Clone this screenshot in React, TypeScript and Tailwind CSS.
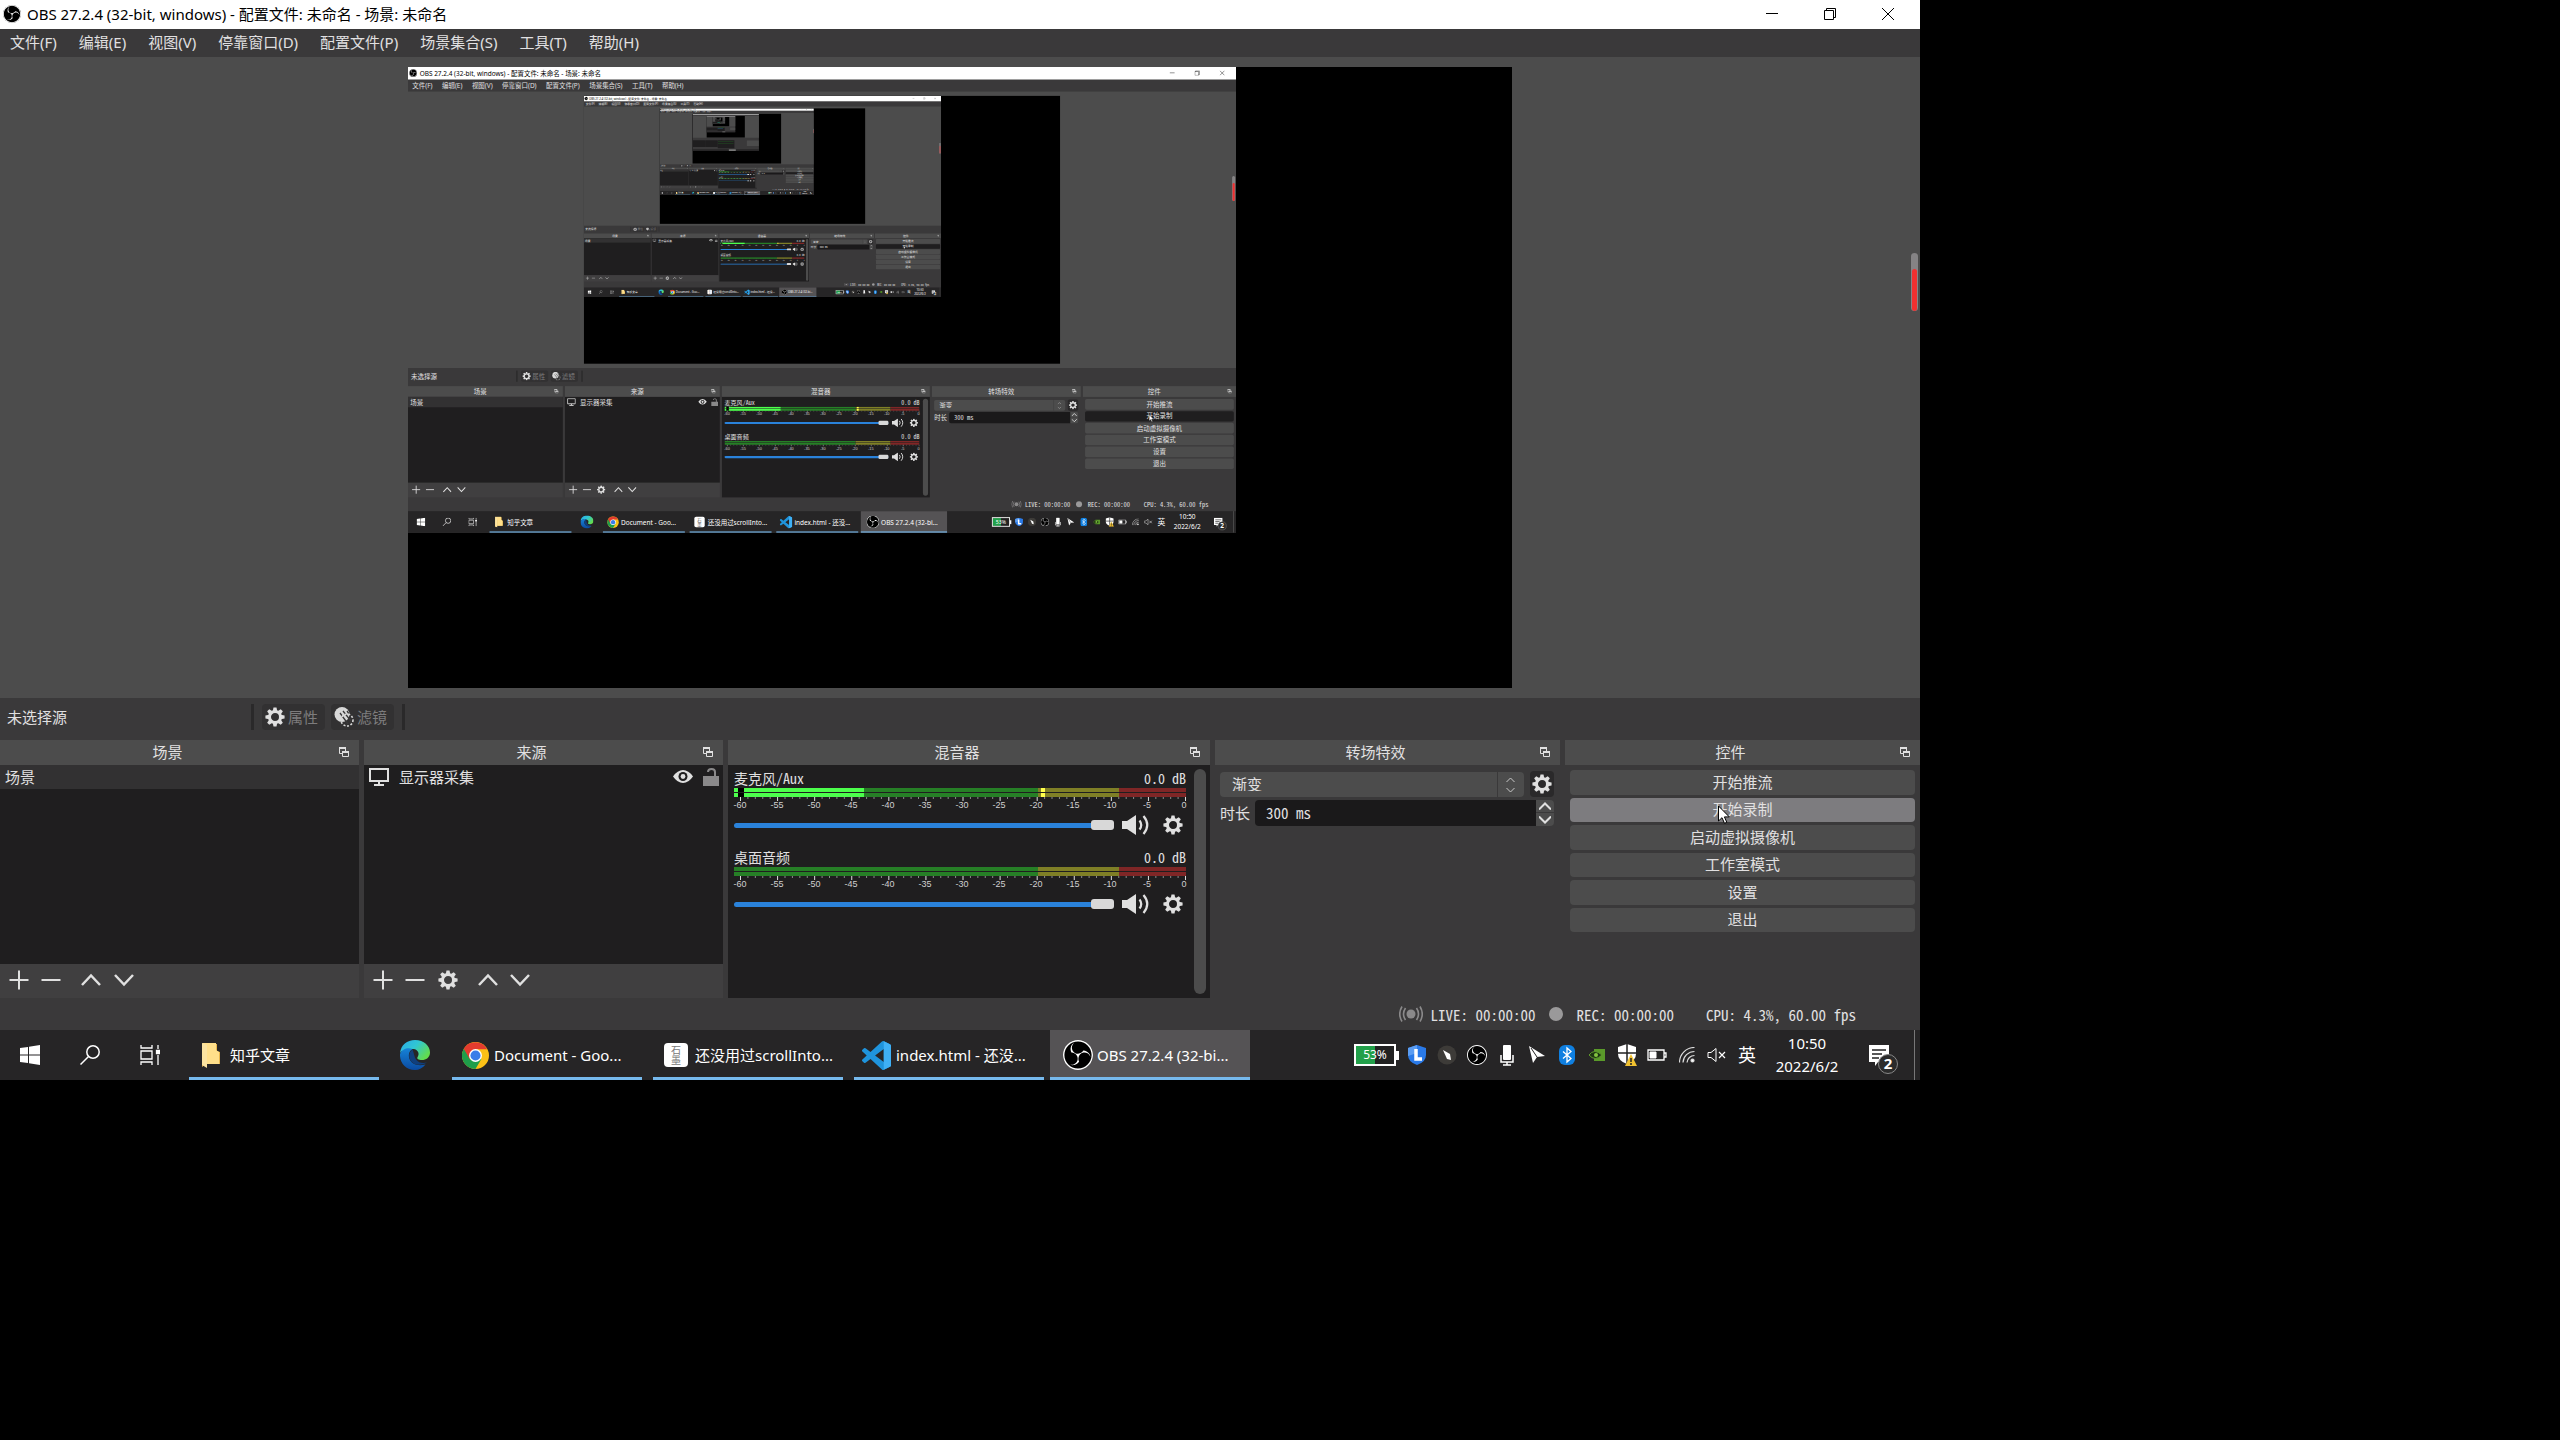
import { useId } from "react";
import { SiObsstudio } from "react-icons/si";

const menus = ["文件(F)", "编辑(E)", "视图(V)", "停靠窗口(D)", "配置文件(P)", "场景集合(S)", "工具(T)", "帮助(H)"];
const controls = ["开始推流", "开始录制", "启动虚拟摄像机", "工作室模式", "设置", "退出"];
const marks = [-60, -55, -50, -45, -40, -35, -30, -25, -20, -15, -10, -5, 0];
const teeth = [0, 45, 90, 135, 180, 225, 270, 315];

const Gear = () => (
  <svg className="h-5 w-5 shrink-0" viewBox="0 0 24 24" fill="#e0e0e0">
    <circle cx="12" cy="12" r="6.6" fill="none" stroke="#e0e0e0" strokeWidth="3.6" />
    {teeth.map((a) => (
      <path key={a} d="M10.2 0.5h3.6l.9 4.5h-5.4z" transform={`rotate(${a} 12 12)`} />
    ))}
  </svg>
);

const Plus = () => (
  <svg className="h-5 w-5" viewBox="0 0 20 20" stroke="#e0e0e0" strokeWidth="2"><path d="M10 0.500v19M0.500 10h19" /></svg>
);
const Minus = () => (
  <svg className="h-5 w-5" viewBox="0 0 20 20" stroke="#e0e0e0" strokeWidth="2"><path d="M0.500 10h19" /></svg>
);
const Up = () => (
  <svg className="h-5 w-5" viewBox="0 0 20 20" fill="none" stroke="#e0e0e0" strokeWidth="2.500"><path d="M1 15l9-9.500 9 9.500" /></svg>
);
const Down = () => (
  <svg className="h-5 w-5" viewBox="0 0 20 20" fill="none" stroke="#e0e0e0" strokeWidth="2.500"><path d="M1 5l9 9.500 9-9.500" /></svg>
);

const Float = () => (
  <svg className="h-[10px] w-[10px]" viewBox="0 0 10 10" fill="none" stroke="#e0e0e0">
    <path d="M3 6.500H.5v-6h6V4" />
    <path d="M0 1h7" strokeWidth="2" />
    <path d="M3.500 4.500h6v5h-6z" fill="#4c4c4c" />
    <path d="M3 5h7" strokeWidth="2" />
  </svg>
);

const Speaker = () => (
  <svg className="h-5 w-7" viewBox="0 0 28 20" fill="#e0e0e0">
    <path d="M0 6h5l9-6v20l-9-6H0z" />
    <path d="M17.500 5.500q3.500 4.500 0 9M21.500 1q7.500 9 0 18" fill="none" stroke="#e0e0e0" strokeWidth="2.200" />
  </svg>
);

const ObsLogo = ({ className }: { className: string }) => (
  <span className={"flex shrink-0 items-center justify-center rounded-full bg-black text-white " + className}>
    <SiObsstudio className="h-full w-full" />
  </span>
);

const Dock = ({ title, className, children }: { title: string; className: string; children: React.ReactNode }) => (
  <section className={"flex flex-col " + className}>
    <header className="flex h-[25px] items-center bg-[#4c4c4c] pr-[10px] pb-[2px]">
      <h2 className="flex-1 text-center">{title}</h2>
      <button className="ml-[4px]" aria-label={title}><Float /></button>
    </header>
    {children}
  </section>
);

const Channel = ({ name, active }: { name: string; active: boolean }) => {
  const id = useId();
  return (
    <div className="h-[79px]">
      <div className="flex h-[19px] items-center justify-between pb-[2px] text-[14px] leading-none">
        <label htmlFor={id}>{name}</label>
        <span>0.0 dB</span>
      </div>
      <svg className="h-[13px] w-full" viewBox="0 0 452 13" preserveAspectRatio="none">
        <path d="M0 0h304v9H0z" fill="#267f26" />
        <path d="M304 0h81v9h-81z" fill="#7f7f26" />
        <path d="M385 0h67v9h-67z" fill="#7f2626" />
        {active && (
          <>
            <path d="M0 0h130v9H0z" fill="#4cff4c" />
            <path d="M4 0h6v9H4z" fill="#000" />
            <path d="M307 0h4v9h-4z" fill="#ffff4c" />
          </>
        )}
        <path d="M0 4h452v1H0z" fill="#1f1e1f" />
        {Array.from({ length: 61 }, (_, i) => (
          <path key={i} d={`M${6.500 + i * 7.417} 9v${i % 5 ? 2 : 4}`} stroke={i % 5 ? "#8a8a8a" : "#e0e0e0"} />
        ))}
      </svg>
      <div className="flex h-[8px] justify-between pr-[2px] pl-[6px] text-[9px] leading-[8px] font-[Liberation_Sans] text-[#d0d0d0]">
        {marks.map((m) => (
          <span key={m} className="flex w-0 justify-center">{m}</span>
        ))}
      </div>
      <div className="flex h-[25px] items-center pt-[7px]">
        <input
          id={id}
          type="range"
          min="0"
          max="100"
          defaultValue="100"
          className="h-[5px] min-w-0 flex-1 appearance-none rounded-sm bg-[#2a82da] [&::-webkit-slider-thumb]:h-[10px] [&::-webkit-slider-thumb]:w-[23px] [&::-webkit-slider-thumb]:appearance-none [&::-webkit-slider-thumb]:rounded-[3px] [&::-webkit-slider-thumb]:bg-[#d8d8d8]"
        />
        <button className="ml-2" aria-label="静音"><Speaker /></button>
        <button className="mr-[3px] ml-[13px]" aria-label="设置"><Gear /></button>
      </div>
    </div>
  );
};

const Folder = () => (
  <svg className="h-[26px] w-[20px]" viewBox="0 0 20 26">
    <path d="M1 2h15v7l3 1v12H5L1 25z" fill="#e8b64c" />
    <path d="M1 1h14v7l3 2v12H6V8z" fill="#ffdf8a" />
    <path d="M1 1l5 2v23l-5-3z" fill="#fbe3a0" />
  </svg>
);

const Edge = () => (
  <svg className="h-[30px] w-[30px]" viewBox="0 0 30 30">
    <defs>
      <linearGradient id="edge-top" x1="0" y1="0" x2="1" y2="0.600">
        <stop offset="0" stopColor="#2aa9e8" />
        <stop offset="0.500" stopColor="#30c6d4" />
        <stop offset="1" stopColor="#62dc4e" />
      </linearGradient>
      <linearGradient id="edge-low" x1="0" y1="0" x2="0" y2="1">
        <stop offset="0" stopColor="#1683d8" />
        <stop offset="1" stopColor="#0b4aa0" />
      </linearGradient>
    </defs>
    <path d="M0 13C1 5 7 0 15 0c9 0 15 6 15 12.500 0 5-4 7.500-8 7.500-3.500 0-5.500-1.200-4.500-2.800 2.500-3.500.500-7.700-4-8.200C8 8.500 2 10 0 13z" fill="url(#edge-top)" />
    <path d="M0 14c2-5.500 8.500-7 12.500-5C9 11 8 15 9.500 19c2 5 8 7.500 16 5.500C23 28 19 30 15 30 6 30-.5 23 0 14z" fill="url(#edge-low)" />
    <path d="M12.500 9.500C9 12 8.500 16 10 19.500c2.500 5.500 10 7 17 3-4 1-8.500.500-11-3-1.800-2.500-1.800-6-3.500-10z" fill="#103f7d" />
  </svg>
);

const Chrome = () => (
  <svg className="h-[27px] w-[27px]" viewBox="0 0 48 48">
    <circle cx="24" cy="24" r="24" fill="#fbc116" />
    <path d="M24 24L3.200 12A24 24 0 0 0 24 48l10.400-18z" fill="#1e9e4a" />
    <path d="M3.200 12A24 24 0 0 1 44.800 13H24v11l-10.400 6z" fill="#e33b2e" />
    <circle cx="24" cy="24" r="11.500" fill="#fff" />
    <circle cx="24" cy="24" r="9" fill="#3a7de8" />
  </svg>
);

const Page = () => (
  <span className="flex h-6 w-6 flex-col items-center justify-center rounded bg-white text-[10px] leading-[10px] text-[#777]">
    <span>石</span>
    <span>墨</span>
  </span>
);

const Code = () => (
  <svg className="h-[29px] w-[29px]" viewBox="0 0 24 24">
    <path fill="#1f94dc" d="M23.150 2.587L18.210.21a1.494 1.494 0 0 0-1.705.29l-9.460 8.630-4.120-3.128a.999.999 0 0 0-1.276.057L.327 7.261A1 1 0 0 0 .326 8.740L3.899 12 .326 15.260a1 1 0 0 0 .001 1.479L1.650 17.940a.999.999 0 0 0 1.276.057l4.120-3.128 9.460 8.630a1.492 1.492 0 0 0 1.704.29l4.942-2.377A1.500 1.500 0 0 0 24 20.060V3.939a1.500 1.500 0 0 0-.85-1.352zm-5.146 14.861L10.826 12l7.178-5.448v10.896z" />
    <path fill="#3fb0f5" d="M18 .2l5.150 2.400a1.500 1.500 0 0 1 .85 1.350v16.100a1.500 1.500 0 0 1-.85 1.350L18 23.800z" />
  </svg>
);

const tasks = [
  { icon: <Chrome />, text: "Document - Goo...", box: "ml-[7px] pl-[10px] w-[190px] gap-[5px]" },
  { icon: <Page />, text: "还没用过scrollInto...", box: "ml-[11px] pl-[11px] w-[190px] gap-[7px]" },
  { icon: <Code />, text: "index.html - 还没...", box: "ml-[11px] pl-[8px] w-[190px] gap-[5px]" },
  { icon: <ObsLogo className="h-[30px] w-[30px]" />, text: "OBS 27.2.4 (32-bi...", box: "ml-[6px] pl-[13px] w-[200px] gap-[4px] bg-[#555355]" },
];

const Tray = () => (
  <div className="flex items-center">
    <div className="mr-[3px] flex items-center">
      <span className="flex h-[22px] w-[42px] items-center justify-center border-2 border-white bg-[linear-gradient(to_right,#22a04a_50%,#222_50%)] text-[12px] leading-none">53%</span>
      <span className="h-[9px] w-[3px] bg-white" />
    </div>
    <ul className="flex items-center">
      <li className="flex w-[30px] justify-center">
        <svg className="h-5 w-5" viewBox="0 0 20 20"><path d="M10 0l9 3v7q0 7-9 10-9-3-9-10V3z" fill="#2a7ae8" /><path d="M1 3l9-3v8L1 11z" fill="#5b9df2" /><path d="M9 4v10h6" stroke="#fff" strokeWidth="3.500" fill="none" /></svg>
      </li>
      <li className="flex w-[30px] justify-center">
        <svg className="h-5 w-5" viewBox="0 0 20 20"><circle cx="10" cy="10" r="9.500" fill="#3d3b38" /><path d="M6 5l7 4 1 6-4-1z" fill="#fff" /></svg>
      </li>
      <li className="flex w-[30px] justify-center"><ObsLogo className="h-5 w-5" /></li>
      <li className="flex w-[30px] justify-center">
        <svg className="h-[22px] w-[14px]" viewBox="0 0 14 22"><rect x="3" y="1" width="8" height="15" rx="1" fill="#fff" /><path d="M1 11v7h12v-7M7 18v3M3 21h8" stroke="#fff" strokeWidth="1.500" fill="none" /></svg>
      </li>
      <li className="flex w-[30px] justify-center">
        <svg className="h-[18px] w-[18px]" viewBox="0 0 18 18"><path d="M1 0l16 10-8 1-4 6z" fill="#fff" /><path d="M3 2l6 9" stroke="#222" /></svg>
      </li>
      <li className="flex w-[30px] justify-center">
        <svg className="h-5 w-4" viewBox="0 0 16 20"><rect width="16" height="20" rx="6" fill="#0f7fe0" /><path d="M4 6.500l8 7L8 17V3l4 3.500-8 7" stroke="#fff" strokeWidth="1.300" fill="none" /></svg>
      </li>
      <li className="flex w-[30px] justify-center">
        <svg className="h-3 w-4" viewBox="0 0 16 12"><path d="M5 0h11v12H5z" fill="#5a9a2a" /><path d="M0 6q5-7 13 0-7 7-13 0z" fill="#1d3512" stroke="#5f9a2c" /><circle cx="7" cy="6" r="2" fill="#84c441" /></svg>
      </li>
      <li className="flex w-[30px] justify-center">
        <svg className="h-[22px] w-5" viewBox="0 0 20 22">
          <path d="M10 0l9 3v7q0 7-9 10-9-3-9-10V3z" fill="#fff" />
          <path d="M10 0v20M1 9h18" stroke="#222" strokeWidth="1.500" />
          <path d="M14 10l6 12H8z" fill="#f2c230" />
          <path d="M14 14v4M14 19v2" stroke="#222" strokeWidth="1.500" />
        </svg>
      </li>
      <li className="flex w-[30px] justify-center">
        <svg className="h-3 w-5" viewBox="0 0 20 12" stroke="#fff" fill="none"><path d="M1 1h16v10H1zM17.500 4h1.500v4h-1.500" strokeWidth="1.300" /><path d="M3 3h6v6H3z" fill="#fff" /></svg>
      </li>
      <li className="flex w-[30px] justify-center">
        <svg className="h-4 w-4" viewBox="0 0 16 16" stroke="#ddd" fill="none" strokeWidth="1.200">
          <path d="M.5 15.500A15 15 0 0 1 15.500.5M4 15.500A11.500 11.500 0 0 1 15.500 4.500M8 15.500A7.500 7.500 0 0 1 15.500 8.500" />
          <circle cx="13.500" cy="13.500" r="1.500" fill="#fff" />
        </svg>
      </li>
      <li className="flex w-[30px] justify-center">
        <svg className="h-[14px] w-5" viewBox="0 0 20 14" stroke="#fff" fill="none"><path d="M1 4.500h3l5-4v13l-5-4H1z" /><path d="M12 4l6 6M18 4l-6 6" strokeWidth="1.200" /></svg>
      </li>
      <li className="w-[30px] text-center text-[18px]">英</li>
    </ul>
    <div className="w-[90px] text-center leading-[23px]">
      <p>10:50</p>
      <p>2022/6/2</p>
    </div>
    <button className="relative mr-[25px] ml-[17px]" aria-label="通知">
      <svg className="h-[21px] w-5" viewBox="0 0 20 21"><path d="M0 0h20v17H9l-3 4v-4H0z" fill="#fff" /><path d="M3 5h14M3 9h10M3 13h7" stroke="#222" strokeWidth="1.500" /></svg>
      <span className="absolute top-[9px] left-[9px] flex h-5 w-5 items-center justify-center rounded-full border border-[#888] bg-[#2b2b2b] text-[15px] leading-none font-bold">2</span>
    </button>
    <span className="mr-[5px] h-[50px] w-px bg-[#777]" />
  </div>
);

const Taskbar = () => (
  <footer className="flex h-[50px] items-stretch bg-[#262526] font-['Noto_Sans','Noto_Sans_CJK_SC',sans-serif] text-white">
    <button className="flex w-[60px] items-center justify-center" aria-label="开始">
      <svg className="h-5 w-5" viewBox="0 0 20 20" fill="#fff"><path d="M0 3l8-1v7.500H0zM9 1.800L20 0v9.500H9zM0 10.500h8V18l-8-1zM9 10.500h11V20L9 18.200z" /></svg>
    </button>
    <button className="flex w-[60px] items-center justify-center" aria-label="搜索">
      <svg className="h-5 w-5" viewBox="0 0 20 20" fill="none" stroke="#fff" strokeWidth="1.500"><circle cx="13" cy="7" r="6.200" /><path d="M8.500 11.500L0.500 19.500" /></svg>
    </button>
    <button className="flex w-[60px] items-center justify-center" aria-label="任务视图">
      <svg className="h-5 w-5" viewBox="0 0 20 20" fill="none" stroke="#fff" strokeWidth="1.300"><path d="M1 0v3h11V0M1 6h11v8H1zM1 20v-3h11v3M18 0v4M18 10v10" /><path d="M16.500 5.500h3v3h-3z" fill="#fff" /></svg>
    </button>
    <button className="ml-[9px] flex w-[190px] items-center gap-[9px] border-b-[3px] border-[#76b9ed] pt-[3px] pl-[12px]"><Folder />知乎文章</button>
    <button className="ml-[6px] flex w-[60px] items-center justify-center" aria-label="Edge"><Edge /></button>
    {tasks.map((t) => (
      <button key={t.text} className={"flex items-center border-b-[3px] border-[#76b9ed] pt-[3px] whitespace-nowrap " + t.box}>
        {t.icon}
        {t.text}
      </button>
    ))}
    <div className="ml-auto flex"><Tray /></div>
  </footer>
);

// Far down the repeats nothing is readable any more, so only the big areas are drawn
const Tiny = ({ depth }: { depth: number }) => (
  <svg className="h-full w-full" viewBox="0 0 1920 1080">
    {Array.from({ length: depth }, (_, i) => {
      const s = 0.43125 ** i;
      const x = (408 * (1 - s)) / (1 - 0.43125);
      const y = (67 * (1 - s)) / (1 - 0.43125);
      return (
        <g key={i} transform={`translate(${x} ${y}) scale(${s})`}>
          <path d="M0 0h1920v1080H0z" fill="#3a393a" />
          <path d="M0 0h1920v29H0z" fill="#bbb" />
          <path d="M0 57h1920v641H0z" fill="#4c4c4c" />
          <path d="M408 67h1104v621H408z" fill="#000" />
          <path d="M0 765h359v199H0zM364 765h359v199H364zM728 765h482v233H728z" fill="#1f1e1f" />
          <path d="M734 788h452v9H734zM734 867h452v9H734z" fill="#267f26" />
          <path d="M734 822h357v6H734zM734 901h357v6H734z" fill="#2a82da" />
          <path d="M1570 771h345v162h-345z" fill="#4c4c4c" />
          <path d="M0 1030h1920v50H0z" fill="#262526" />
          <path d="M1050 1030h200v50h-200z" fill="#777" />
        </g>
      );
    })}
  </svg>
);

// The captured display contains the window itself, so the preview repeats
// record is the colour of the record button: hovered outside, pressed in the frames behind it
const Desktop = ({ depth, className, record }: { depth: number; className: string; record: string }) => {
  const id = useId();
  return (
    <div className={"flex aspect-video flex-col overflow-hidden bg-[#3a393a] font-['Noto_Sans_CJK_SC',sans-serif] text-[15px] leading-none text-[#e1e0e1] " + className}>
      <header className="flex h-[29px] shrink-0 items-center bg-white pr-[3px] pb-px pl-[3px] font-['Noto_Sans','Noto_Sans_CJK_SC',sans-serif] text-black">
        <ObsLogo className="h-[18px] w-[18px]" />
        <h1 className="flex-1 pl-[6px]">OBS 27.2.4 (32-bit, windows) - 配置文件: 未命名 - 场景: 未命名</h1>
        <button className="flex w-[58px] justify-center" aria-label="最小化"><svg className="h-3 w-3" viewBox="0 0 12 12" stroke="#000"><path d="M0 5.500h12" /></svg></button>
        <button className="flex w-[58px] justify-center" aria-label="还原"><svg className="h-3 w-3" viewBox="0 0 12 12" stroke="#000" fill="none"><path d="M.5 2.500h9v9h-9zM2.500 2.500v-2h9v9h-2" /></svg></button>
        <button className="flex w-[58px] justify-center" aria-label="关闭"><svg className="h-3 w-3" viewBox="0 0 12 12" stroke="#000"><path d="M0 0l12 12M12 0L0 12" /></svg></button>
      </header>
      <nav className="flex h-[28px] shrink-0 items-center gap-[22px] pb-[2px] pl-[10px] font-['Noto_Sans','Noto_Sans_CJK_SC',sans-serif]">
        {menus.map((m) => (
          <button key={m}>{m}</button>
        ))}
      </nav>

      <main className="relative min-h-0 flex-1 bg-[#4c4c4c] pt-[10px]">
        <div className="relative mx-auto aspect-video w-[57.5%] overflow-hidden bg-black">
          <div className="absolute top-0 left-0 aspect-video w-[1920px] origin-top-left scale-[0.43125]" inert>
            {depth > 0 ? <Desktop depth={depth - 1} className="w-full" record="bg-[#1f1e1f]" /> : <Tiny depth={4} />}
          </div>
        </div>
        <div className="absolute top-[196px] right-[2px] flex h-[58px] w-[7px] justify-center overflow-hidden rounded-full bg-[#858385] pt-4">
          <span className="w-[5px] rounded-full bg-[#f03030]" />
        </div>
      </main>

      <div className="flex h-[42px] shrink-0 items-center pb-[5px]">
        <span className="w-[251px] pl-[7px]">未选择源</span>
        <span className="h-[26px] w-[3px] bg-[#2a292a]" />
        <button className="ml-2 flex h-[26px] w-[63px] items-center gap-[3px] rounded bg-[#323132] pl-[3px] text-[#7d7c7d]"><Gear />属性</button>
        <button className="ml-[6px] flex h-[26px] w-[63px] items-center gap-[3px] rounded bg-[#323132] pl-[3px] text-[#7d7c7d]">
          <svg className="h-5 w-5" viewBox="0 0 20 20">
            <circle cx="8" cy="7.500" r="7.500" fill="#d8d8d8" />
            <path d="M6 6l8 11M9 4l8 10M13 4l5 7" stroke="#3a393a" strokeWidth="1.300" />
            <circle cx="13" cy="13" r="6" fill="none" stroke="#d8d8d8" strokeWidth="1.600" strokeDasharray="2 1.600" />
          </svg>
          滤镜
        </button>
        <span className="ml-2 h-[26px] w-[3px] bg-[#2a292a]" />
      </div>

      <div className="flex h-[258px] shrink-0 gap-[5px] [font-feature-settings:'hwid']">
        <Dock title="场景" className="w-[359px]">
          <ul className="h-[199px] bg-[#1f1e1f]">
            <li className="flex h-[24px] items-center bg-[#323132] pb-px pl-[5px]">场景</li>
          </ul>
          <div className="flex h-[34px] items-center bg-[#403f40] pb-[2px] pl-[9px]">
            <button aria-label="添加"><Plus /></button>
            <button className="ml-[12px]" aria-label="移除"><Minus /></button>
            <button className="ml-[20px]" aria-label="上移"><Up /></button>
            <button className="ml-[13px]" aria-label="下移"><Down /></button>
          </div>
        </Dock>
        <Dock title="来源" className="w-[359px]">
          <ul className="h-[199px] bg-[#1f1e1f]">
            <li className="flex h-[24px] items-center pr-[4px] pb-px pl-[5px]">
              <svg className="h-[18px] w-[20px]" viewBox="0 0 20 18" fill="none" stroke="#e0e0e0" strokeWidth="2"><path d="M1 1h18v12H1z" /><path d="M10 13v3M5 17h10" /></svg>
              <span className="flex-1 pl-[10px]">显示器采集</span>
              <svg className="h-[13px] w-[20px]" viewBox="0 0 20 13"><path d="M0 6.500Q4.500 0 10 0t10 6.500Q15.500 13 10 13T0 6.500z" fill="#e0e0e0" /><circle cx="10" cy="6.500" r="4.500" fill="#1f1e1f" /><circle cx="10" cy="6.500" r="2.400" fill="#e0e0e0" /></svg>
              <svg className="ml-[10px] h-[18px] w-[16px]" viewBox="0 0 16 18"><path d="M0 8h16v10H0z" fill="#8a898a" /><path d="M5 4q0-3 3.500-3T12 4v5" fill="none" stroke="#8a898a" strokeWidth="2" /></svg>
            </li>
          </ul>
          <div className="flex h-[34px] items-center bg-[#403f40] pb-[2px] pl-[9px]">
            <button aria-label="添加"><Plus /></button>
            <button className="ml-[12px]" aria-label="移除"><Minus /></button>
            <button className="ml-[13px]" aria-label="设置"><Gear /></button>
            <button className="ml-[20px]" aria-label="上移"><Up /></button>
            <button className="ml-[12px]" aria-label="下移"><Down /></button>
          </div>
        </Dock>
        <Dock title="混音器" className="w-[482px]">
          <div className="flex flex-1 bg-[#1f1e1f] pl-[6px]">
            <div className="flex-1 pt-[4px] pr-[8px]">
              <Channel name="麦克风/Aux" active />
              <Channel name="桌面音频" active={false} />
            </div>
            <span className="my-[4px] mr-[4px] w-[12px] rounded-full bg-[#4c4c4c]" />
          </div>
        </Dock>
        <Dock title="转场特效" className="w-[345px]">
          <div className="flex flex-col gap-[3px] pt-[6px] pr-[6px] pl-[5px]">
            <div className="flex items-center gap-[6px]">
              <div className="relative flex-1">
                <select aria-label="转场特效" className="block h-[25px] w-full appearance-none rounded bg-[#4c4c4c] pb-px pl-[12px]">
                  <option>渐变</option>
                </select>
                <svg className="absolute top-[5px] right-[9px] h-4 w-[9px]" viewBox="0 0 9 16" fill="none" stroke="#c8c8c8"><path d="M.5 5l4-4 4 4M.5 11l4 4 4-4" /></svg>
                <span className="absolute top-0 right-[26px] h-[25px] w-px bg-[#3a393a]" />
              </div>
              <button className="flex h-[26px] w-6 items-center justify-center rounded bg-[#2a292a]" aria-label="设置"><Gear /></button>
            </div>
            <div className="flex items-center">
              <label htmlFor={id} className="w-[35px] pb-[2px]">时长</label>
              <input id={id} defaultValue="300 ms" className="h-[26px] min-w-0 flex-1 rounded-l bg-[#1a191a] pb-[2px] pl-[11px]" />
              <div className="flex w-[18px] flex-col gap-px">
                <button className="flex h-[12px] items-center justify-center rounded-tr bg-[#4c4c4c]" aria-label="增加"><svg className="h-2 w-3" viewBox="0 0 12 8" fill="none" stroke="#e0e0e0" strokeWidth="2"><path d="M0 7.500l6-6 6 6" /></svg></button>
                <button className="flex h-[13px] items-center justify-center rounded-br bg-[#4c4c4c]" aria-label="减少"><svg className="h-2 w-3" viewBox="0 0 12 8" fill="none" stroke="#e0e0e0" strokeWidth="2"><path d="M0 .5l6 6 6-6" /></svg></button>
              </div>
            </div>
          </div>
        </Dock>
        <Dock title="控件" className="flex-1">
          <div className="relative mt-[5px] mr-[5px] ml-[5px] grid h-[162px] grid-rows-6 gap-[3px]">
            {controls.map((c) => (
              <button key={c} className={"rounded pb-[2px] " + (c === "开始录制" ? record : "bg-[#4c4c4c]")}>{c}</button>
            ))}
            <svg className="absolute top-[35px] left-[148px] h-[19px] w-3" viewBox="0 0 12 19"><path d="M.5 1v15l3.500-3.300 2.500 5.600 2.300-1-2.400-5.400H11.300z" fill="#fff" stroke="#000" /></svg>
          </div>
        </Dock>
      </div>

      <div className="flex h-[32px] shrink-0 items-center justify-end pr-[64px] [font-feature-settings:'hwid']">
        <svg className="h-[16px] w-[24px]" viewBox="0 0 24 16" fill="none" stroke="#8a898a" strokeWidth="1.600"><circle cx="12" cy="8" r="4.500" fill="#8a898a" stroke="none" /><path d="M6.500 2q-4 6 0 12M17.500 2q4 6 0 12M3 .5q-4.500 7.500 0 15M21 .5q4.500 7.500 0 15" /></svg>
        <span className="ml-[7px]">LIVE: 00:00:00</span>
        <span className="ml-[14px] h-[14px] w-[14px] rounded-full bg-[#9a999a]" />
        <span className="ml-[13px]">REC: 00:00:00</span>
        <span className="ml-[32px]">CPU: 4.3%, 60.00 fps</span>
      </div>

      <Taskbar />
    </div>
  );
};

export default function App() {
  return (
    <div className="min-h-screen bg-black">
      <Desktop depth={3} className="w-3/4" record="bg-[#7d7c7f]" />
    </div>
  );
}
